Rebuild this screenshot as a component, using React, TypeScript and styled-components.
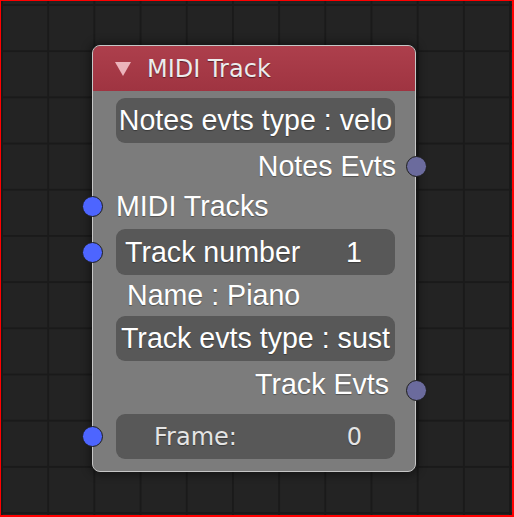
import React, { FC } from 'react';
import styled, { createGlobalStyle } from 'styled-components';

const GlobalStyle = createGlobalStyle`
  html, body {
    margin: 0;
    padding: 0;
    background: #232323;
  }
  * {
    box-sizing: border-box;
  }
`;

const Canvas = styled.div`
  position: relative;
  width: 514px;
  height: 517px;
  overflow: hidden;
  border-style: solid;
  border-color: #ff0000;
  border-width: 1px 2px 2px 1px;
  background-color: #232323;
  background-image:
    linear-gradient(to right, #1a1a1a 1.5px, transparent 1.5px),
    linear-gradient(to bottom, #1a1a1a 1.5px, transparent 1.5px);
  background-size: 46.2px 46.2px;
  background-position: 0px 3px;
`;

const NodeFrame = styled.div`
  position: absolute;
  left: 91px;
  top: 44px;
  width: 324px;
  height: 427px;
  display: flex;
  flex-direction: column;
  border: 1px solid #c6c6c6;
  border-radius: 8px;
  background: #7c7c7c;
  box-shadow: 0 0 10px 2px rgba(0, 0, 0, 0.45);
`;

const Header = styled.div`
  height: 45px;
  display: flex;
  align-items: center;
  gap: 16px;
  padding-left: 22px;
  border-radius: 7px 7px 0 0;
  background: linear-gradient(to bottom, #ad3f4c, #9f3441);
  font: 24px 'DejaVu Sans', sans-serif;
  color: #ececec;
  text-shadow: 0 1px 1px rgba(0, 0, 0, 0.45);
`;

const Collapse = styled.svg`
  width: 16px;
  height: 15px;
  margin-top: 2px;
`;

const Body = styled.div`
  display: flex;
  flex-direction: column;
  padding: 7px 0 11px;
  font: 28.6px 'Liberation Sans', Arial, sans-serif;
  color: #ffffff;
  text-shadow: 0 1px 1px rgba(0, 0, 0, 0.35);
`;

type TRowProps = {
  $h: number;
  $align?: 'start' | 'end';
  $inset?: number;
  $mt?: number;
};

const Row = styled.div<TRowProps>`
  position: relative;
  height: ${({ $h }) => $h}px;
  margin-top: ${({ $mt }) => $mt ?? 0}px;
  display: flex;
  align-items: center;
  justify-content: ${({ $align }) => ($align === 'end' ? 'flex-end' : 'flex-start')};
  padding: 0 ${({ $align, $inset }) => ($align === 'end' ? $inset ?? 20 : 20)}px 0
    ${({ $align, $inset }) => ($align === 'end' ? 23 : $inset ?? 23)}px;
  white-space: nowrap;
`;

type TButtonProps = {
  $split?: boolean;
  $pl?: number;
  $pr?: number;
};

const Field = styled.div<TButtonProps>`
  flex: 1;
  height: 100%;
  display: flex;
  align-items: center;
  justify-content: ${({ $split }) => ($split ? 'space-between' : 'center')};
  padding: 0 ${({ $pr }) => $pr ?? 0}px 0 ${({ $pl }) => $pl ?? 0}px;
  border-radius: 9px;
  background: #585858;
  overflow: hidden;
`;

const SmallText = styled.span`
  font: 24px 'DejaVu Sans', sans-serif;
  color: #e4e4e4;
`;

type TSocketProps = {
  $side: 'in' | 'out';
  $dy?: number;
};

const Socket = styled.span<TSocketProps>`
  position: absolute;
  top: calc(50% - 10.5px + ${({ $dy }) => $dy ?? 0}px);
  ${({ $side }) => ($side === 'in' ? 'left: -11.5px;' : 'right: -12px;')}
  width: 21px;
  height: 21px;
  border-radius: 50%;
  border: 1px solid #1e1e1e;
  background: ${({ $side }) => ($side === 'in' ? '#4d65ff' : '#6b6b9d')};
`;

const App: FC = () => (
  <>
    <GlobalStyle />
    <Canvas>
      <NodeFrame>
        <Header>
          <Collapse viewBox='0 0 16 15'>
            <polygon points='0,0 16,0 8,14' fill='rgba(255, 214, 220, 0.78)' />
          </Collapse>
          <span>MIDI Track</span>
        </Header>
        <Body>
          <Row $h={45}>
            <Field>Notes evts type : velo</Field>
          </Row>
          <Row $h={46} $align='end' $inset={19}>
            Notes Evts
            <Socket $side='out' />
          </Row>
          <Row $h={34}>
            MIDI Tracks
            <Socket $side='in' />
          </Row>
          <Row $h={46} $mt={6}>
            <Field $split $pl={9} $pr={33}>
              <span>Track number</span>
              <span>1</span>
            </Field>
            <Socket $side='in' />
          </Row>
          <Row $h={41} $inset={34}>
            Name : Piano
          </Row>
          <Row $h={45}>
            <Field>Track evts type : sust</Field>
          </Row>
          <Row $h={46} $align='end' $inset={26}>
            Track Evts
            <Socket $side='out' $dy={6} />
          </Row>
          <Row $h={45} $mt={7}>
            <Field $split $pl={38} $pr={33}>
              <SmallText>Frame:</SmallText>
              <SmallText>0</SmallText>
            </Field>
            <Socket $side='in' />
          </Row>
        </Body>
      </NodeFrame>
    </Canvas>
  </>
);

export default App;
